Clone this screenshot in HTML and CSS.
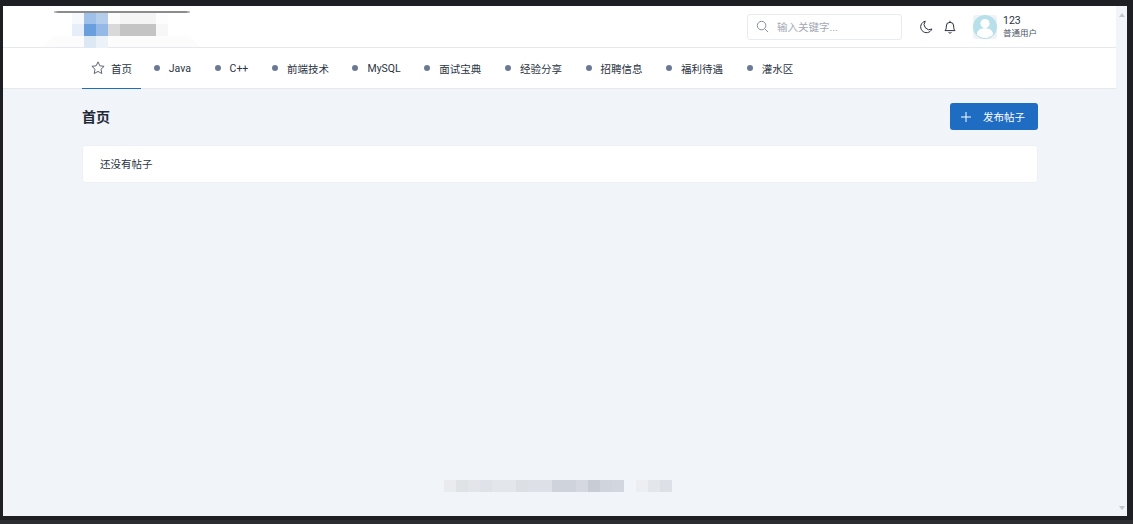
FILE: index.html
```html
<!DOCTYPE html>
<html>
<head>
	<meta charset="utf-8">
	<title>首页</title>
	<link rel="stylesheet" href="styles.css">
</head>
<body>
<div class="window">
	<div class="page">
		<header class="topbar">
			<div class="logo">
				<span class="c1"></span><span class="c2"></span><span class="c3"></span><span class="c4"></span><span class="c5"></span><span class="c5"></span><span class="c5"></span><span class="c6"></span>
				<span class="c7"></span><span class="c8"></span><span class="c9"></span><span class="c10"></span><span class="c11"></span><span class="c11"></span><span class="c11"></span><span class="c12"></span>
				<span></span><span class="c13"></span><span class="c14"></span>
			</div>
			<div class="search">
				<svg class="search-icon" viewBox="0 0 14 14"><circle cx="6" cy="6" r="4.6"/><path d="M9.4 9.4 13 13"/></svg>
				<span>输入关键字...</span>
			</div>
			<svg class="tool moon" viewBox="0 0 14 14"><path d="M6.3 1.2A5.8 5.8 0 1 0 12.9 9 5.2 5.2 0 0 1 6.3 1.2Z"/></svg>
			<svg class="tool bell" viewBox="0 0 14 14"><path d="M2 10.6c.9-.9 1.3-1.8 1.3-3.4V6a3.7 3.7 0 0 1 7.4 0v1.2c0 1.6.4 2.5 1.3 3.4ZM7 2.3V.8M5.6 12.2a1.5 1.5 0 0 0 2.8 0"/></svg>
			<div class="user">
				<div class="avatar">
					<svg viewBox="0 0 24 24"><circle class="face" cx="12" cy="12" r="12"/><circle class="body" cx="12" cy="8.6" r="4.6"/><path class="body" d="M3.8 19.6c.4-4.4 3.4-6.4 8.2-6.4s7.800 2 8.200 6.400A12 12 0 0 1 12 23a12 12 0 0 1-8.200-3.400Z"/></svg>
				</div>
				<div class="user-text">
					<div class="user-name">123</div>
					<div class="user-role">普通用户</div>
				</div>
			</div>
		</header>

		<nav class="nav">
			<a class="nav-item home">
				<svg class="star" viewBox="0 0 14 14"><path d="M7 .9l1.850 3.900 4.250.55-3.100 2.950.8 4.200L7 10.450 3.200 12.500l.8-4.200L.9 5.350l4.250-.55Z"/></svg>
				首页
			</a>
			<a class="nav-item"><i></i>Java</a>
			<a class="nav-item"><i></i>C++</a>
			<a class="nav-item"><i></i>前端技术</a>
			<a class="nav-item"><i></i>MySQL</a>
			<a class="nav-item"><i></i>面试宝典</a>
			<a class="nav-item"><i></i>经验分享</a>
			<a class="nav-item"><i></i>招聘信息</a>
			<a class="nav-item"><i></i>福利待遇</a>
			<a class="nav-item"><i></i>灌水区</a>
		</nav>

		<main class="main">
			<div class="main-head">
				<h2>首页</h2>
				<button>
					<svg viewBox="0 0 10 10"><path d="M5 0v10M0 5h10"/></svg>
					发布帖子
				</button>
			</div>
			<div class="card">还没有帖子</div>
		</main>

		<footer class="footer">
			<span class="f1"></span><span class="f2"></span><span class="f3"></span><span class="f4"></span><span class="f5"></span><span class="f5"></span><span class="f6"></span><span class="f7"></span><span class="f7"></span><span class="f8"></span><span class="f8"></span><span class="f9"></span><span class="f10"></span><span class="f11"></span><span class="f12"></span>
			<span></span><span class="f13"></span><span class="f5"></span><span class="f7"></span>
		</footer>
	</div>
	<div class="scrollbar">
		<b class="up"></b>
		<b class="down"></b>
	</div>
</div>
</body>
</html>
```

FILE: styles.css
```css
html,body{margin:0;padding:0;height:100%;}
body{
	background:linear-gradient(#1e1f23 520px,#2b2d31 520px);
	font-family:Roboto,"Noto Sans CJK SC",sans-serif;
	font-size:10.5px;
	color:#2a3342;
	overflow:hidden;
}
.window{display:flex;height:510px;margin:6px 6px 0 3px;background:#f1f4f9;}
.page{flex:1;display:flex;flex-direction:column;min-width:0;}

/* top bar */
.topbar{
	display:flex;
	align-items:center;
	height:41px;
	background:#fff;
	border-bottom:1px solid #e6e8ec;
	padding-right:79px;
}
.logo{
	position:relative;
	display:grid;
	grid-template-columns:repeat(8,12px);
	grid-auto-rows:12px;
	margin:6px auto 0 69px;
	align-self:flex-start;
	z-index:1;
}
.logo::before{
	content:"";
	position:absolute;
	left:-18px;
	top:-1px;
	width:136px;
	height:2px;
	background:linear-gradient(90deg,#d0d0d0,#8c8c8c 3%,#8c8c8c 97%,#d0d0d0);
}
.logo::after{
	content:"";
	position:absolute;
	left:-29px;
	top:24px;
	width:157px;
	height:11px;
	background:#fcfcfc;
	clip-path:polygon(7% 0,93% 0,100% 100%,0 100%);
	z-index:-1;
}
.c1{background:#f5f9fe;}
.c2{background:#9fc0e8;}
.c3{background:#b3cdeb;}
.c4{background:#fbfbfb;}
.c5{background:#f4f4f4;}
.c6{background:#fdfdfd;}
.c7{background:#e6eef9;}
.c8{background:#6a9fdd;}
.c9{background:#94b9e6;}
.c10{background:#d9d9d9;}
.c11{background:#c4c4c4;}
.c12{background:#f7f7f7;}
.c13{background:#dce8f4;}
.c14{background:#edf2f8;}

.search{
	display:flex;
	align-items:center;
	width:153px;
	height:24px;
	border:1px solid #e8ebef;
	border-radius:3px;
	color:#a3a9b3;
	margin-right:17px;
}
.search-icon{
	width:13px;
	height:13px;
	margin:0 8px;
	fill:none;
	stroke:#7b8694;
	stroke-width:1;
}
.tool{width:14px;height:14px;fill:none;stroke:#2a3140;stroke-width:1;}
.moon{margin-right:10px;}
.bell{margin-right:16px;}
.user{display:flex;align-items:center;}
.avatar{width:24px;height:24px;border-radius:3px;background:#eff3f7;margin-right:6px;}
.avatar svg{display:block;width:24px;height:24px;}
.avatar .face{fill:#b8e0ea;}
.avatar .body{fill:#fff;}
.user-text{display:flex;flex-direction:column;}
.user-name{font-size:10.5px;line-height:12px;}
.user-role{font-size:8.500px;line-height:12px;color:#4b5563;}

/* nav */
.nav{
	display:flex;
	align-items:stretch;
	height:40px;
	background:#fff;
	border-bottom:1px solid #e6e8ec;
	padding-left:79px;
}
.nav-item{display:flex;align-items:center;padding:1px 11.8px 0;white-space:nowrap;}
.nav-item i{width:6px;height:6px;border-radius:50%;background:#6b7a94;margin:-1px 9px 0 0;}
.nav-item.home{padding:1px 9px 0;margin-right:1px;border-bottom:1px solid #1e6bc4;margin-bottom:-1px;}
.star{width:14px;height:14px;margin:-1px 6px 0 0;fill:none;stroke:#4b5563;stroke-width:.9;}

/* content */
.main{width:956px;margin-left:79px;}
.main-head{display:flex;align-items:center;justify-content:space-between;margin:14px 0 15px;}
.main-head h2{margin:0;padding-top:2px;font-size:14px;font-weight:700;line-height:25px;color:#1f2937;}
button{
	display:flex;
	align-items:center;
	width:88px;
	height:27px;
	padding:0 0 0 11px;
	border:none;
	border-radius:3px;
	background:#1f6cc3;
	color:#fff;
	font:inherit;
}
button svg{width:10px;height:10px;margin-right:12px;fill:none;stroke:#fff;stroke-width:1;}
.card{
	height:36px;
	line-height:36px;
	padding:2px 0 0 18px;
	background:#fff;
	box-shadow:0 0 0 1px #eceff4 inset;
	border-radius:4px;
}

/* footer */
.footer{display:flex;margin:auto 0 24px 441px;}
.footer span{width:12px;height:12px;}
.f1{background:#e9ebee;}
.f2{background:#dfe3e6;}
.f3{background:#e3e5ea;}
.f4{background:#dfe2e9;}
.f5{background:#e3e6ea;}
.f6{background:#dcdfe4;}
.f7{background:#dde0e7;}
.f8{background:#cfd3dc;}
.f9{background:#d5d8e0;}
.f10{background:#c8ccd5;}
.f11{background:#d0d4dc;}
.f12{background:#d2d6de;}
.f13{background:#eceef2;}

/* scrollbar */
.scrollbar{
	display:flex;
	flex-direction:column;
	justify-content:space-between;
	align-items:center;
	width:11px;
	padding:7px 0 6px;
	background:#f1f4f9;
}
.scrollbar b{width:0;height:0;border-left:3.500px solid transparent;border-right:3.500px solid transparent;}
.up{border-bottom:4px solid #c4c6ca;}
.down{border-top:4px solid #c4c6ca;}
```
